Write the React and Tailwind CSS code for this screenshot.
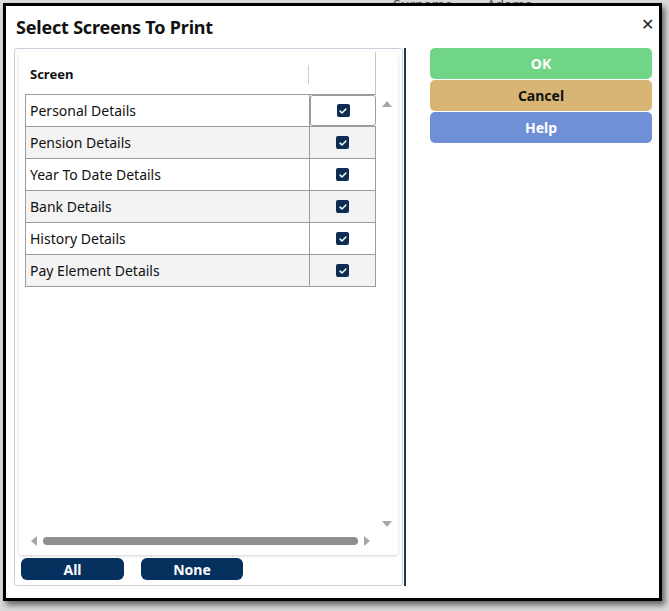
import { useState } from "react";

const SCREENS = [
  "Personal Details",
  "Pension Details",
  "Year To Date Details",
  "Bank Details",
  "History Details",
  "Pay Element Details",
];

function Check({ on }) {
  return (
    <span className="flex h-[13px] w-[13px] items-center justify-center rounded-[2px] bg-[#0e2c52]">
      {on && (
        <svg viewBox="0 0 12 12" className="h-[10px] w-[10px]" fill="none" stroke="white" strokeWidth="1.8" strokeLinecap="round" strokeLinejoin="round">
          <path d="M2.5 6.2l2.3 2.2L9.5 3.6" />
        </svg>
      )}
    </span>
  );
}

function Tri({ dir }) {
  const d = {
    up: "M0 6L5 0L10 6Z",
    down: "M0 0L10 0L5 6Z",
    left: "M6 0L6 10L0 5Z",
    right: "M0 0L6 5L0 10Z",
  }[dir];
  const box = dir === "up" || dir === "down" ? "0 0 10 6" : "0 0 6 10";
  const cls = dir === "up" || dir === "down" ? "h-[6px] w-[10px]" : "h-[10px] w-[6px]";
  return (
    <svg viewBox={box} className={cls}>
      <path d={d} fill="#a7a7a7" />
    </svg>
  );
}

export default function App() {
  const [checked, setChecked] = useState(SCREENS.map(() => true));

  const toggle = (i) => setChecked((c) => c.map((v, j) => (j === i ? !v : v)));

  return (
    <div className="relative h-[611px] w-[669px] overflow-hidden bg-[#dcdcdc] font-['Noto_Sans',sans-serif]">
      {/* page behind the dialog */}
      <div className="flex h-[8px] items-end gap-[34px] pl-[393px] text-[14px] leading-none text-[#555]">
        <span className="-mb-[4px]">Surname</span>
        <span className="-mb-[4px]">Adams</span>
      </div>

      <div className="absolute left-[3px] top-[3px] flex h-[598px] w-[659px] flex-col border-[3px] border-black bg-white shadow-[3px_4px_6px_rgba(0,0,0,0.55)]">
        <div className="flex h-[42px] items-center justify-between pl-[10px] pr-[5px]">
          <h1 className="text-[18px] font-bold tracking-[-0.2px] text-[#111]">Select Screens To Print</h1>
          <span className="pb-[6px] text-[16px] leading-none text-[#222]">✕</span>
        </div>

        <div className="flex pl-[8px]">
          <div className="flex h-[538px] w-[389px] flex-col rounded-[3px] border border-[#c9d2dc] px-[4px] pt-[3px]">
            <div className="flex h-[503px] flex-col rounded-[3px] bg-white pl-[6px] shadow-[0_1px_3px_rgba(0,0,0,0.18)]">
              <div className="flex flex-1">
                <div className="flex w-[351px] flex-col">
                  <div className="flex h-[42px] items-end border-r border-[#c6c6c6] pb-[10px]">
                    <div className="flex h-[19px] w-[284px] items-center border-r border-[#cfcfcf] pl-[5px] text-[13px] font-bold text-[#111]">
                      Screen
                    </div>
                  </div>
                  <div className="border-t border-[#9c9c9c]">
                    {SCREENS.map((s, i) => (
                      <div
                        key={s}
                        className={`flex h-[32px] border-b border-l border-[#9c9c9c] ${i % 2 ? "bg-[#f3f3f3]" : "bg-white"}`}
                      >
                        <div className="flex w-[284px] items-center border-r border-[#9c9c9c] pl-[4px] text-[14px] text-[#111]">
                          {s}
                        </div>
                        <button
                          onClick={() => toggle(i)}
                          className={`flex flex-1 items-center justify-center border-r border-[#9c9c9c] ${i === 0 ? "rounded-[3px] border border-[#2b2b2b]" : ""}`}
                        >
                          <Check on={checked[i]} />
                        </button>
                      </div>
                    ))}
                  </div>
                </div>
                <div className="flex w-[21px] flex-col items-center justify-between pb-[6px] pt-[49px]">
                  <Tri dir="up" />
                  <Tri dir="down" />
                </div>
              </div>
              <div className="flex h-[22px] items-center gap-[6px] pb-[6px] pl-[6px]">
                <Tri dir="left" />
                <div className="h-[8px] w-[315px] rounded-full bg-[#8f8f8f]" />
                <Tri dir="right" />
              </div>
            </div>

            <div className="mt-[3px] flex gap-[17px] pl-[2px]">
              <button className="h-[22px] w-[103px] rounded-[6px] bg-[#06305e] text-[14px] font-bold text-white">All</button>
              <button className="h-[22px] w-[102px] rounded-[6px] bg-[#06305e] text-[14px] font-bold text-white">None</button>
            </div>
          </div>

          <div className="ml-[1px] h-[538px] w-[2px] bg-[#24364f]" />

          <div className="ml-[24px] flex w-[222px] flex-col gap-[1px]">
            <button className="h-[31px] rounded-[5px] bg-[#70d587] text-[14px] font-bold text-white">OK</button>
            <button className="h-[31px] rounded-[5px] bg-[#d8b574] text-[14px] font-bold text-[#111]">Cancel</button>
            <button className="h-[31px] rounded-[5px] bg-[#6f90d6] text-[14px] font-bold text-white">Help</button>
          </div>
        </div>
      </div>
    </div>
  );
}
